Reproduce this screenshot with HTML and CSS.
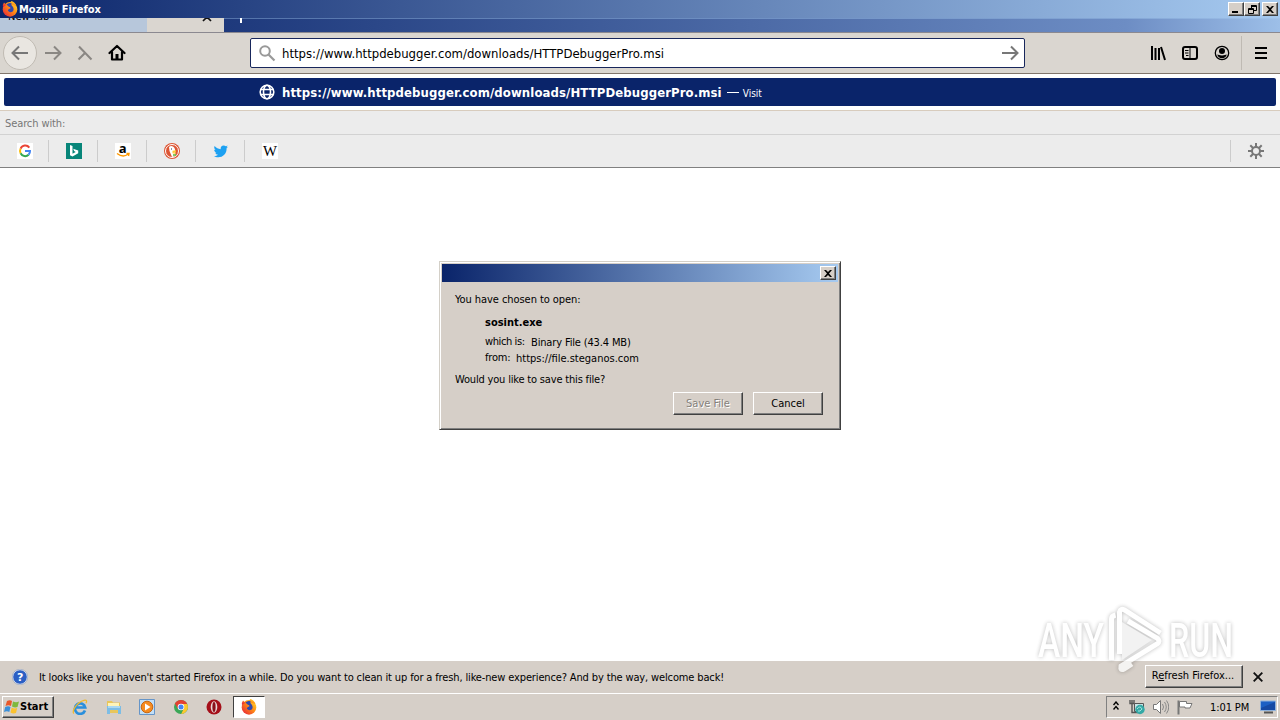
FILE: index.html
```
<!DOCTYPE html>
<html lang="en">
<head>
  <meta charset="UTF-8">
  <title>Mozilla Firefox</title>
  <link rel="stylesheet" href="styles.css">
</head>
<body>
  <svg class="defs" width="0" height="0">
    <defs>
      <linearGradient id="fox" x1="1" y1="0" x2="0" y2="1">
        <stop offset="0" stop-color="#ffe82f"/>
        <stop offset=".45" stop-color="#ff8a16"/>
        <stop offset="1" stop-color="#e3153f"/>
      </linearGradient>
      <symbol id="firefox" viewBox="0 0 16 16">
        <circle cx="8" cy="8.400" r="7.300" fill="url(#fox)"/>
        <path d="M1 6Q.500 3.500 2 1.500L4.500 4zM8 3Q8 1 9.500 0q3.500 1 5 5z" fill="url(#fox)"/>
        <path d="M4.500 3.500Q6.500 1.300 9.500 2.200 8.500 4 11 6q1.500 3-.6 4.700Q7.500 12 5.800 9.500 6 8 8.500 7.300 8.800 6 6.500 5.500z" fill="#3048ae"/>
      </symbol>
      <symbol id="close" viewBox="0 0 8 7">
        <path d="M0 0h2l2 2 2-2h2L5 3.500 8 7H6L4 5 2 7H0l3-3.500z"/>
      </symbol>
    </defs>
  </svg>

  <header class="titlebar">
    <svg class="titlebar-icon"><use href="#firefox"/></svg>
    <span class="titlebar-text">Mozilla Firefox</span>
    <div class="window-buttons">
      <button class="win-button"><svg width="8" height="8"><path d="M0 6h6v2H0z"/></svg></button>
      <button class="win-button"><svg width="9" height="9"><path d="M3 .5h5.500v5H6M.5 3.500h5v5h-5zM3 1.500h5M.5 4.500h5M3.500 1v2" fill="none" stroke="#000"/></svg></button>
      <button class="win-button win-close"><svg width="8" height="7"><use href="#close"/></svg></button>
    </div>
  </header>

  <nav class="tabs">
    <div class="tab"><span>New Tab</span></div>
    <div class="tab tab-active"><svg width="10" height="10" viewBox="0 0 10 10"><path d="m1 1 8 8M9 1 1 9" stroke="#111" stroke-width="1.700"/></svg></div>
    <div class="tab-new"></div>
  </nav>

  <div class="toolbar">
    <div class="nav-buttons">
      <span class="back"><svg width="18" height="16" viewBox="0 0 18 16"><path d="M17 8H2M8 1.500 1.500 8 8 14.500"/></svg></span>
      <svg class="nav-icon" width="18" height="16" viewBox="0 0 18 16"><path d="M1 8h15M10 1.500 16.500 8 10 14.500"/></svg>
      <svg class="nav-icon stop" width="16" height="16" viewBox="0 0 16 16"><path d="m2 1.500 12.500 13M8 8l-6.500 6.500"/></svg>
      <svg class="home" width="18" height="18" viewBox="0 0 18 18"><path d="m1.500 9 7.500-7 7.500 7M4 8v7.500h10V8" fill="none" stroke="#000" stroke-width="2.200" stroke-linejoin="round" stroke-linecap="round"/><path d="M7.500 10h3v5h-3z"/></svg>
    </div>
    <div class="urlbar">
      <svg width="18" height="18" viewBox="0 0 18 18"><circle cx="7" cy="7" r="4.800" fill="none" stroke="#999" stroke-width="2"/><path d="m10.500 10.500 6 6" stroke="#999" stroke-width="2.200"/></svg>
      <span class="url">https://www.httpdebugger.com/downloads/HTTPDebuggerPro.msi</span>
      <svg class="go" width="18" height="16" viewBox="0 0 18 16"><path d="M1 8h15M10 1.500 16.500 8 10 14.500"/></svg>
    </div>
    <div class="tools">
      <svg width="16" height="16" viewBox="0 0 16 16"><path d="M2 1v14M5.500 3v12M9 3v12M11 2l4 13" fill="none" stroke="#000" stroke-width="2"/></svg>
      <svg width="16" height="16" viewBox="0 0 16 16"><rect x="1" y="2" width="14" height="12" rx="2" fill="none" stroke="#000" stroke-width="2"/><path d="M8 2v12M3 5.500h3.500M3 8h3.500M4 10.500h2.500" stroke="#000"/></svg>
      <svg width="16" height="16" viewBox="0 0 16 16"><circle cx="8" cy="8" r="6.700" fill="none" stroke="#000" stroke-width="1.300"/><circle cx="8" cy="6" r="3"/><path d="M3.200 9.500c1.500.2 2 1 4.800 1s3.300-.8 4.800-1C12 12 10.500 13.300 8 13.300S4 12 3.200 9.500z"/></svg>
      <span class="tools-separator"></span>
      <svg class="menu" width="12" height="12"><path d="M0 0h12v2H0zM0 5h12v2H0zM0 10h12v2H0z"/></svg>
    </div>
  </div>

  <section class="results">
    <div class="result">
      <svg width="16" height="16" viewBox="0 0 16 16"><circle cx="8" cy="8" r="6.800"/><ellipse cx="8" cy="8" rx="3.500" ry="6.800"/><path d="M1.500 5.500h13M1.500 10.500h13"/></svg>
      <span class="result-url">https://www.httpdebugger.com/downloads/HTTPDebuggerPro.msi</span>
      <span class="result-dash"></span>
      <span class="result-action">Visit</span>
    </div>
  </section>
  <div class="search-label"><span>Search with:</span></div>
  <div class="engines">
    <div class="engine"><svg width="16" height="16" viewBox="0 0 16 16"><path fill="#fff" d="M0 0h16v16H0z"/><g fill="none" stroke-width="2"><path d="M12.300 4.600A5 5 0 0 0 3.600 5.700" stroke="#ea4335"/><path d="M3.600 5.700a5 5 0 0 0 0 4.600" stroke="#fbbc05"/><path d="M3.600 10.300a5 5 0 0 0 8 1.400" stroke="#34a853"/><path d="M11.600 11.700A5 5 0 0 0 13 8H8" stroke="#4285f4"/></g></svg></div>
    <div class="engine"><svg width="16" height="16" viewBox="0 0 16 16"><path fill="#078579" d="M0 0h16v16H0z"/><path fill="#fff" d="m4 2 2.500.9v7.800l3.200-1.800-1.600-.8-.9-2.300 5 1.800v2.600l-5.700 3.400L4 12.200z"/></svg></div>
    <div class="engine"><svg class="amazon-icon" width="16" height="16" viewBox="0 0 16 16"><path fill="#fff" d="M0 0h16v16H0z"/><text x="3.700" y="9.500" class="amazon">a</text><path d="M2 10.500q6 4.500 11 .8M11.500 10.500h2.500l-.5 2.500" fill="none" stroke="#f90" stroke-width="1.400"/></svg></div>
    <div class="engine"><svg width="16" height="16" viewBox="0 0 16 16"><circle cx="8" cy="8" r="8" fill="#d53"/><circle cx="8" cy="8" r="6.500" fill="#d53" stroke="#fff"/><path fill="#fff" d="M5 4C7 2 10.500 3.500 11 6.500l.5 6.500-3.500 1-2.500-6z"/><path d="M8.500 8.500 12 8M8.500 9.500 11.500 10" stroke="#fc3" stroke-width="1.400"/><path d="M9 12h3" stroke="#5b3" stroke-width="1.500"/><path d="M7 6h1" stroke="#235"/></svg></div>
    <div class="engine"><svg width="16" height="16" viewBox="0 0 16 16"><path fill="#1da1f2" d="M1 13c2 0 3-.4 4-1.200-1.400 0-2.300-.8-2.700-2h1.200C2 9.400 1.200 8.100 1.200 6.800l1.300.3C1.200 6 .9 4.500 1.600 3.100 3.200 5 5.300 6 7.700 6.200 7.300 4 8.800 2.400 10.600 2.400c.9 0 1.600.3 2.200.9l1.900-.7-1.300 1.600L15 3.800l-1.400 1.500C13.800 11 9.700 14.500 5 14.300c-1.500 0-2.900-.5-4-1.300z"/></svg></div>
    <div class="engine"><svg width="16" height="16" viewBox="0 0 16 16"><path fill="#fff" d="M0 0h16v16H0z"/><text x="1" y="12.500" class="wiki" textLength="14" lengthAdjust="spacingAndGlyphs">W</text></svg></div>
    <div class="engine-settings"><svg width="16" height="16" viewBox="0 0 16 16"><circle cx="8" cy="8" r="4" fill="none" stroke="#777" stroke-width="2"/><path d="M8 0v4M8 12v4M0 8h4M12 8h4M2.300 2.300 5 5M11 11l2.700 2.700M13.700 2.300 11 5M5 11l-2.700 2.700" stroke="#777" stroke-width="2"/></svg></div>
  </div>

  <main class="page">
    <div class="dialog">
      <div class="dialog-title"><button class="win-button"><svg width="8" height="7"><use href="#close"/></svg></button></div>
      <div class="dialog-body">
        <p class="question"><span class="t-open">You have chosen to open:</span></p>
        <div class="file">
          <p class="file-name"><span>sosint.exe</span></p>
          <p class="file-row"><span class="t-which">which is:</span><span class="t-binary">Binary File (43.4 MB)</span></p>
          <p class="file-row"><span class="t-from">from:</span><span class="t-host">https://file.steganos.com</span></p>
        </div>
        <p class="question"><span class="t-save">Would you like to save this file?</span></p>
        <div class="dialog-buttons">
          <button class="button disabled"><span>Save File</span></button>
          <button class="button"><span>Cancel</span></button>
        </div>
      </div>
    </div>
  </main>

  <div class="notification">
    <svg width="16" height="16" viewBox="0 0 16 16"><circle cx="8" cy="8" r="7.300" fill="#2c5fc4" stroke="#dfe6f4"/><circle cx="8" cy="8" r="7.800" fill="none" stroke="#8797b5" stroke-width=".5"/><text x="5" y="12" class="help">?</text></svg>
    <span class="notification-text">It looks like you haven't started Firefox in a while. Do you want to clean it up for a fresh, like-new experience? And by the way, welcome back!</span>
    <button class="button refresh"><span>R<u>e</u>fresh Firefox...</span></button>
    <svg class="notification-close" width="10" height="10" viewBox="0 0 10 10"><path d="m.7.700 8.600 8.600M9.300.700.700 9.300" stroke="#111" stroke-width="1.900"/></svg>
  </div>

  <footer class="taskbar">
    <button class="start">
      <svg width="16" height="16" viewBox="0 0 16 16"><path d="M3 2q3-1.500 5 0L7 7Q4.500 5.500 1.500 7z" fill="#e8582a"/><path d="M9 2.500q3 1.500 6 0L13.500 8Q11 9 8 7.500z" fill="#7fb83c"/><path d="M1.200 8q3-1.500 5.300 0l-1.200 5Q3 11.500 0 13z" fill="#3a8fd9"/><path d="M7.700 8.500q2.500 1.500 5.500.5L12 14q-3 1-5.500-.5z" fill="#fbc22f"/></svg>
      <span>Start</span>
    </button>
    <div class="quick-launch">
      <svg width="16" height="16" viewBox="0 0 16 16"><path d="M13 11.500A5.200 5.200 0 1 1 13.200 8.500H4" fill="none" stroke="#2a8fdc" stroke-width="2.700"/><path d="M2 14.500C-1 13 5 3 12 1.300c3-.6 3 1 2 3" fill="none" stroke="#efb92d" stroke-width="1.300"/></svg>
      <svg width="16" height="16" viewBox="0 0 16 16"><path d="M1 2h5l1 1.500h7V14H1z" fill="#e9c65b"/><path d="M2 4h11v5H2z" fill="#fff4b8"/><path d="M1 7h14v8h-3v-4H4v4H1z" fill="#7dbde5"/><path d="M2 8h12" stroke="#d8f2ff"/></svg>
      <svg width="16" height="16" viewBox="0 0 16 16"><path d="M.5.500h15v15H.5z" fill="#c3dff6" stroke="#6695c8"/><circle cx="8" cy="8" r="5.800" fill="#f68b1f" stroke="#c76611"/><path d="m6 4.500 5.500 3.500L6 11.500z" fill="#fff"/></svg>
      <svg width="16" height="16" viewBox="0 0 16 16"><circle cx="8" cy="8" r="7" fill="#3aa757"/><path d="M8 8 1.900 4.500A7 7 0 0 1 14.100 4.500z" fill="#e34133"/><path d="M1.900 4.500 5 10l3-2V5z" fill="#e34133"/><path d="M8 5h6.200a7 7 0 0 1-6 10L11 9z" fill="#fdc82f"/><circle cx="8" cy="8" r="3.300" fill="#fff"/><circle cx="8" cy="8" r="2.500" fill="#4285f4"/></svg>
      <svg width="16" height="16" viewBox="0 0 16 16"><circle cx="8" cy="8" r="7.500" fill="#a50f19"/><ellipse cx="8" cy="8" rx="3.300" ry="5.800" fill="#e9d8d8"/><ellipse cx="8" cy="8" rx="1.600" ry="5" fill="#89101a"/></svg>
    </div>
    <div class="task-active"><svg width="16" height="16"><use href="#firefox"/></svg></div>
    <div class="tray">
      <svg class="chevrons" width="6" height="9" viewBox="0 0 6 9"><path d="m.5 4 2.500-3 2.500 3M.5 8.500l2.500-3 2.500 3" fill="none" stroke="#000" stroke-width="1.400"/></svg>
      <svg class="tray-net" width="16" height="16" viewBox="0 0 16 16"><path d="M5.500 4.500h9v8h-9z" fill="#c8e4e6" stroke="#555"/><path d="M1 1v3.500h4V1M3 1v3M3 5v8.500h6" fill="none" stroke="#555" stroke-width="1.400"/><circle cx="11" cy="10.500" r="4.700" fill="#35a9a6"/><path d="M8 10q3-4 5 0-2 3-4 2" fill="none" stroke="#a6e4df"/></svg>
      <svg class="tray-sound" width="16" height="16" viewBox="0 0 16 16"><path d="M.5 5.500h3l4-4v13l-4-4h-3z" fill="#fff" stroke="#777"/><path d="M9.500 5q2 3 0 6M11.500 3q3.500 5 0 10M13.500 1.500q4.500 6.500 0 13" fill="none" stroke="#888"/></svg>
      <svg class="tray-flag" width="16" height="16" viewBox="0 0 16 16"><path d="M1.500 1.500v14" stroke="#777" stroke-width="2"/><path d="M2.500 2.500h7v2h5.500l-2 4.500H8V8H2.500z" fill="#fff" stroke="#777"/></svg>
      <span class="clock">1:01 PM</span>
      <svg class="tray-desktop" width="16" height="14" viewBox="0 0 16 14"><path d="M.5 1h15v9.500H.5z" fill="#1c60c4" stroke="#8fb2dc"/><path d="M1 8 15 2v8H1z" fill="#164aa4"/><path d="M4 12.500h9" stroke="#555" stroke-width="2"/></svg>
    </div>
  </footer>

  <svg class="watermark" width="210" height="74" viewBox="0 0 210 74">
    <path class="watermark-fill" d="M92 18 122 36 92 56z"/>
    <text x="8" y="53" textLength="66" lengthAdjust="spacingAndGlyphs">ANY</text>
    <text x="139" y="53" textLength="64" lengthAdjust="spacingAndGlyphs">RUN</text>
    <path d="M81.500 56V15q0-3 4-4M89.500 50V8q1-4 5-2l36 23M98 17l29 17q4 3 0 6L91 62q-1 5 3 3l8-5"/>
  </svg>
</body>
</html>
```

FILE: styles.css
```
:root {
  --face: #d6cfc8;
  --navy: #0a246a;
  --sky: #a6caf0;
}

* {
  box-sizing: border-box;
}

body {
  margin: 0;
  width: 1280px;
  height: 720px;
  overflow: hidden;
  display: flex;
  flex-direction: column;
  background: #fff;
  color: #000;
  font-family: "DejaVu Sans Condensed", "DejaVu Sans", sans-serif;
  font-stretch: condensed;
  font-size: 11px;
  line-height: 14px;
  white-space: nowrap;
}

button {
  font: inherit;
  color: inherit;
  padding: 0;
}

svg {
  display: block;
  flex-shrink: 0;
}

p {
  margin: 0;
}

.defs {
  position: absolute;
}

.titlebar {
  height: 18px;
  flex-shrink: 0;
  display: flex;
  align-items: center;
  padding: 0 2px;
  background: linear-gradient(90deg, var(--navy), var(--sky));
}

.titlebar-icon {
  width: 16px;
  height: 16px;
}

.titlebar-text {
  margin-left: 1px;
  padding-top: 1px;
  color: #fff;
  font-weight: bold;
}

.window-buttons {
  margin-left: auto;
  display: flex;
}

.win-button {
  width: 16px;
  height: 14px;
  display: flex;
  align-items: center;
  justify-content: center;
  background: var(--face);
  border: 1px solid;
  border-color: #fff #404040 #404040 #fff;
  box-shadow: inset -1px -1px #808080;
}

.win-close {
  margin-left: 2px;
}

.tabs {
  height: 15px;
  flex-shrink: 0;
  display: flex;
  overflow: hidden;
  border-bottom: 1px solid #8b8990;
  background: linear-gradient(90deg, var(--navy), #6d8dc4 88%, #9dbfe8);
  box-shadow: inset 0 1px rgba(166, 202, 240, 0.4);
}

.tab {
  width: 147px;
  padding-left: 8px;
  background: #b7c7db;
}

.tab span {
  display: block;
  margin-top: -8px;
}

.tab-active {
  width: 77px;
  padding-left: 55px;
  background: #dad6d0;
}

.tab-active svg {
  margin-top: -6px;
}

.tab-new {
  width: 2px;
  height: 5px;
  margin-left: 16px;
  background: #fff;
}

.toolbar {
  height: 41px;
  flex-shrink: 0;
  display: flex;
  align-items: center;
  background: #dad6d0;
  border-bottom: 1px solid #80756b;
}

.nav-buttons {
  width: 250px;
  padding-left: 3px;
  display: flex;
  align-items: center;
}

.nav-buttons svg,
.go {
  fill: none;
  stroke: #777;
  stroke-width: 2;
}

.back {
  width: 34px;
  height: 34px;
  border: 1px solid #c0bbb3;
  border-radius: 50%;
  background: #e9e6e1;
  display: flex;
  align-items: center;
  justify-content: center;
}

.nav-buttons .nav-icon {
  margin-left: 7px;
  stroke: #8a8783;
}

.nav-buttons .stop {
  margin-left: 15px;
}

.nav-buttons .home {
  margin-left: 15px;
  fill: #000;
  stroke: none;
}

.urlbar {
  width: 775px;
  height: 30px;
  padding: 0 5px 0 7px;
  display: flex;
  align-items: center;
  background: #fff;
  border: 1px solid #18275c;
  border-radius: 2px;
}

.url {
  margin-left: 6px;
  padding-top: 1px;
  font-size: 13px;
}

.go {
  margin-left: auto;
}

.tools {
  margin-left: 125px;
  display: flex;
  align-items: center;
  gap: 16px;
}

.tools-separator {
  width: 1px;
  height: 34px;
  margin-left: -5px;
  background: #bfbab3;
}

.menu {
  margin-left: -3px;
}

.results {
  height: 37px;
  flex-shrink: 0;
  padding: 4px;
  border-bottom: 1px solid #d8ccbd;
}

.result {
  height: 28px;
  padding-left: 255px;
  display: flex;
  align-items: center;
  background: var(--navy);
  border-radius: 2px;
  color: #fff;
}

.result svg {
  fill: none;
  stroke: #fff;
  stroke-width: 1.6;
}

.result-url {
  margin-left: 7px;
  padding-top: 1px;
  font-size: 13px;
  font-weight: bold;
  letter-spacing: 0.1px;
}

.result-dash {
  width: 12px;
  height: 1px;
  margin-left: 5px;
  background: #fff;
}

.result-action {
  margin: 4px 0 0 4px;
  font-size: 10px;
}

.search-label {
  height: 24px;
  flex-shrink: 0;
  padding: 6px 5px 0;
  background: #ececec;
  border-bottom: 1px solid #d2d2d2;
  color: #777;
  letter-spacing: -0.1px;
}

.engines {
  height: 33px;
  flex-shrink: 0;
  display: flex;
  align-items: center;
  background: #ececec;
  border-bottom: 1px solid #808080;
}

.engine {
  width: 49px;
  height: 22px;
  padding-left: 2px;
  display: flex;
  align-items: center;
  justify-content: center;
  border-right: 1px solid #ccc;
}

.engine:nth-child(6) {
  border-right: none;
  padding-left: 1px;
}

.amazon {
  font: bold 13px "Open Sans", sans-serif;
}

.wiki {
  font: 14px "Liberation Serif", serif;
}

.engine-settings {
  height: 22px;
  width: 50px;
  margin-left: auto;
  padding-left: 17px;
  display: flex;
  align-items: center;
  border-left: 1px solid #ccc;
}

.page {
  flex: 1;
  display: flex;
  justify-content: center;
  align-items: flex-start;
  padding-top: 93px;
}

.dialog {
  width: 402px;
  height: 169px;
  padding: 2px;
  background: var(--face);
  border: 1px solid;
  border-color: #d4d0c8 #404040 #404040 #d4d0c8;
  box-shadow: inset 1px 1px #fff, inset -1px -1px #808080;
}

.dialog-title {
  height: 18px;
  padding: 2px;
  display: flex;
  justify-content: flex-end;
  background: linear-gradient(90deg, var(--navy), var(--sky));
}

.dialog-body {
  padding: 11px 15px 0 13px;
}

.file {
  padding: 9px 0 6px 30px;
}

.file-name {
  font-weight: bold;
  margin-bottom: 5px;
}

.file-row {
  display: flex;
  height: 16px;
}

.t-binary,
.t-host {
  padding-top: 1px;
}

.t-open {
  letter-spacing: -0.06px;
}

.t-which {
  width: 46px;
  letter-spacing: -0.4px;
}

.t-binary {
  letter-spacing: -0.15px;
}

.t-from {
  width: 31px;
  letter-spacing: -0.2px;
}

.t-save {
  letter-spacing: -0.18px;
}

.dialog-buttons {
  display: flex;
  justify-content: flex-end;
  gap: 9px;
  margin-top: 6px;
}

.button {
  width: 70px;
  height: 23px;
  background: var(--face);
  border: 1px solid;
  border-color: #fff #404040 #404040 #fff;
  box-shadow: inset -1px -1px #808080;
}

.dialog-buttons .button {
  margin-top: -1px;
}

.disabled {
  margin-right: 1px;
  color: #85817b;
  text-shadow: 1px 1px #fff;
}

.notification {
  height: 32px;
  flex-shrink: 0;
  padding: 0 17px 0 12px;
  display: flex;
  align-items: center;
  background: var(--face);
}

.help {
  font: bold 11px "DejaVu Sans", sans-serif;
  fill: #fff;
}

.notification-text {
  margin-left: 11px;
  padding-top: 1px;
  letter-spacing: -0.138px;
}

.refresh {
  width: 98px;
  margin: 0 10px 2px auto;
  padding-right: 2px;
}

.taskbar {
  height: 27px;
  flex-shrink: 0;
  padding: 2px 2px 0;
  display: flex;
  background: var(--face);
  border-top: 1px solid #fff;
}

.start {
  width: 52px;
  height: 22px;
  display: flex;
  align-items: center;
  padding-left: 1px;
  background: var(--face);
  border: 1px solid;
  border-color: #fff #404040 #404040 #fff;
  box-shadow: inset -1px -1px #808080;
  font-weight: bold;
}

.quick-launch {
  display: flex;
  align-items: center;
  gap: 17.5px;
  height: 22px;
  margin-left: 18px;
}

.task-active {
  width: 32px;
  height: 22px;
  margin-left: 11px;
  display: flex;
  align-items: center;
  justify-content: center;
  background: #fff;
  border: 1px solid;
  border-color: #404040 #fff #fff #404040;
}

.tray {
  width: 172px;
  height: 22px;
  margin-left: auto;
  padding-left: 6px;
  display: flex;
  align-items: center;
  border: 1px solid;
  border-color: #808080 #fff #fff #808080;
}

.chevrons {
  margin-bottom: 3px;
}

.tray-net {
  margin-left: 10px;
}

.tray-sound,
.tray-flag {
  margin-left: 8px;
}

.clock {
  margin-left: 17px;
  padding-top: 1px;
  width: 40px;
  letter-spacing: -0.1px;
}

.tray-desktop {
  margin-left: 10px;
}

.watermark {
  position: absolute;
  left: 1030px;
  top: 604px;
  fill: #fff;
  filter: drop-shadow(0 0 2px rgba(0, 0, 0, 0.35));
  opacity: 0.75;
}

.watermark text {
  font: 500 49px Roboto, sans-serif;
}

.watermark path {
  fill: none;
  stroke: #fff;
  stroke-width: 5;
}

.watermark .watermark-fill {
  fill: #eee;
  stroke: none;
}
```
